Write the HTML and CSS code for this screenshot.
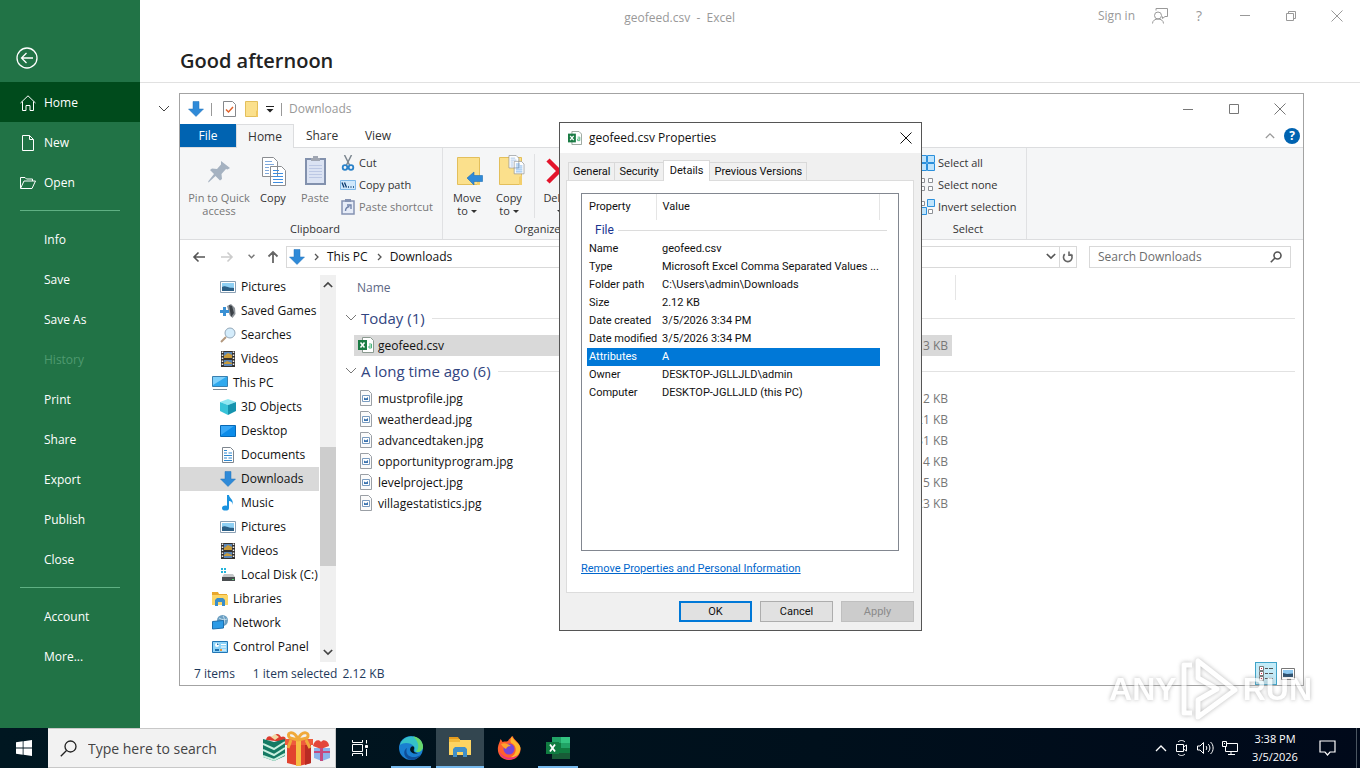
FILE: index.html
```html
<!DOCTYPE html>
<html lang="en">
<head>
    <meta charset="UTF-8">
    <meta name="viewport" content="width=device-width, initial-scale=1.0">
    <title>geofeed.csv - Excel</title>
    <link rel="stylesheet" href="styles.css">
</head>
<body>
    <!-- shared icons -->
    <svg class="defs" width="0" height="0">
        <symbol id="i-down" viewBox="0 0 16 16"><path fill="#2f8ad8" stroke="#2272b9" stroke-width=".5" d="M5 .5h6V8h4.5L8 15.5.5 8H5z"/></symbol>
        <symbol id="i-picture" viewBox="0 0 16 16"><path fill="#fff" stroke="#8aa0b4" d="M.5 2.500h15v11H.5z"/><path fill="#8fd0f4" d="M2 4h12v8H2z"/><path fill="#2b5f86" d="M2 8c3-2 5 1 12 1v3H2z"/></symbol>
        <symbol id="i-video" viewBox="0 0 16 16"><path fill="#33312f" d="M1 0h14v16H1z"/><path fill="#5a86b8" d="M4 1h8v6H4zM4 9h8v6H4z"/><path fill="#c99b3a" d="M4 5l4-3 4 2v3H4zM4 12l3-2 5 2v1H4z"/><path stroke="#eee" stroke-width="1.500" stroke-dasharray="1.500 1.500" d="M2.500 .5v15M13.500 .5v15"/></symbol>
        <symbol id="i-jpg" viewBox="0 0 16 16"><path fill="#fbfbfb" stroke="#9a9fa5" d="M2.500.5h8l3 3v12h-11z"/><path fill="#fff" stroke="#7a9cc0" d="M4.500 5.500h7v6h-7z"/><path fill="#3c74b0" d="M6 10V7.500l2 1L10 7v3z"/></symbol>
        <symbol id="i-csv" viewBox="0 0 16 16"><path fill="#fff" stroke="#8b9a90" d="M4.500.5h8l3 3v12h-11z"/><path fill="#1b7c45" d="M0 3h9v10H0z"/><path stroke="#fff" stroke-width="1.500" d="M2.500 5.500l4 5M6.500 5.500l-4 5"/><path fill="none" stroke="#4bb57c" d="M11 7h2.500v4H11V9h2.500"/></symbol>
        <symbol id="i-close" viewBox="0 0 12 12"><path stroke="currentColor" d="M.5.5l11 11M11.500.5l-11 11"/></symbol>
        <symbol id="i-chev" viewBox="0 0 12 8"><path fill="none" stroke="currentColor" d="M1 1l5 5 5-5"/></symbol>
        <symbol id="i-folder" viewBox="0 0 28 30"><path fill="#fbe08c" stroke="#e3bf5b" d="M.5.5h22v27H.5z"/><path fill="#f3cf6d" d="M20 20l3-2v10h-3z"/></symbol>
        <symbol id="i-pages" viewBox="0 0 26 30"><path fill="#fff" stroke="#8a8d91" d="M1.500.5h11l4 4v15h-15zM9.500 9.500h11l4 4v15h-15z"/><path stroke="#7fa9dc" d="M4 4.500h7M4 7.500h9M4 10.500h4M4 13.500h4M4 16.500h4"/><path stroke="#3d8de0" d="M12 13.500h6M12 16.500h10M12 19.500h10M12 22.500h10M12 25.500h10"/></symbol>
    </svg>

    <div class="excel">
        <aside class="backstage">
            <button class="back" aria-label="Back">
                <svg width="22" height="22" viewBox="0 0 22 22" fill="none" stroke="#fff" stroke-width="1.300"><circle cx="11" cy="11" r="10"/><path d="M17 11H6M10.500 6L5.500 11l5 5"/></svg>
            </button>
            <nav>
                <a href="#" class="item active"><svg width="16" height="16" viewBox="0 0 16 16" fill="none" stroke="#fff"><path d="M.5 8L8 .8 15.500 8M2.500 6.500v9h3.500v-5h4v5h3.500v-9"/></svg>Home</a>
                <a href="#" class="item"><svg width="16" height="16" viewBox="0 0 16 16" fill="none" stroke="#fff"><path d="M2.500.5h7l4 4v11h-11zM9.500.5v4h4"/></svg>New</a>
                <a href="#" class="item"><svg width="16" height="16" viewBox="0 0 16 16" fill="none" stroke="#fff"><path d="M.5 13V2.500h4.500l1.500 1.500h6v2M.5 13.500L4 6h11.500l-3.500 7.500z"/></svg>Open</a>
                <hr>
                <a href="#" class="item sub">Info</a>
                <a href="#" class="item sub">Save</a>
                <a href="#" class="item sub">Save As</a>
                <a href="#" class="item sub off">History</a>
                <a href="#" class="item sub">Print</a>
                <a href="#" class="item sub">Share</a>
                <a href="#" class="item sub">Export</a>
                <a href="#" class="item sub">Publish</a>
                <a href="#" class="item sub">Close</a>
                <hr>
                <a href="#" class="item sub">Account</a>
                <a href="#" class="item sub">More...</a>
            </nav>
        </aside>
        <main class="start">
            <header>
                <div class="excel-title">geofeed.csv&nbsp; - &nbsp;Excel</div>
                <div class="excel-tools">
                    <a href="#" class="signin">Sign in</a>
                    <button aria-label="Feedback"><svg width="18" height="18" viewBox="0 0 18 18" fill="none" stroke="#999"><circle cx="7" cy="8.500" r="3.500"/><path d="M1.500 16.500c0-6 11-6 11 0M5 3.500v-2h11.500v8H14l-2.500 2v-2"/></svg></button>
                    <button class="q">?</button>
                    <button aria-label="Minimize"><svg width="12" height="12" viewBox="0 0 12 12" stroke="#999"><path d="M1 5.500h10"/></svg></button>
                    <button aria-label="Restore"><svg width="12" height="12" viewBox="0 0 12 12" fill="none" stroke="#999"><path d="M1.500 3.500h7v7h-7zM3.500 3V1.500h7v7H9"/></svg></button>
                    <button aria-label="Close"><svg width="12" height="12"><use href="#i-close"/></svg></button>
                </div>
                <h1>Good afternoon</h1>
            </header>
            <button class="collapse" aria-label="Collapse"><svg width="12" height="8"><use href="#i-chev"/></svg></button>
        </main>
    </div>

    <section class="explorer">
        <div class="titlebar">
            <svg width="16" height="16"><use href="#i-down"/></svg>
            <i class="bar"></i>
            <svg class="check" width="13" height="16" viewBox="0 0 13 16"><path fill="#fff" stroke="#85888c" d="M.5.500h9l3 3v12H.5z"/><path fill="none" stroke="#e0622b" stroke-width="1.500" d="M3 8.500l2.500 2.500L10 6"/></svg>
            <svg width="14" height="16" viewBox="0 0 14 16"><path fill="#fbe08c" stroke="#e3bf5b" d="M.5.500h12v15H.5z"/><path fill="#f0c860" d="M11 10l2-1.500V16h-2z"/></svg>
            <svg width="8" height="7" viewBox="0 0 8 7"><path stroke="#222" d="M0 .500h8"/><path fill="#222" d="M.5 3h7L4 6.500z"/></svg>
            <i class="bar"></i>
            <span class="name">Downloads</span>
            <div class="controls">
                <button aria-label="Minimize"><svg width="12" height="12" viewBox="0 0 12 12" stroke="#777"><path d="M1 6.500h10"/></svg></button>
                <button aria-label="Maximize"><svg width="12" height="12" viewBox="0 0 12 12" fill="none" stroke="#777"><path d="M1.500 1.500h9v9h-9z"/></svg></button>
                <button aria-label="Close"><svg width="12" height="12"><use href="#i-close"/></svg></button>
            </div>
        </div>

        <div class="tabs">
            <button class="file">File</button>
            <button class="home">Home</button>
            <button>Share</button>
            <button>View</button>
            <div class="tabs-end">
                <svg width="10" height="7" viewBox="0 0 12 8" fill="none" stroke="#999" stroke-width="1.500"><path d="M1 7l5-5 5 5"/></svg>
                <button class="help">?</button>
            </div>
        </div>

        <div class="ribbon">
            <div class="group clipboard">
                <div class="tools">
                    <button class="big pin off"><svg width="32" height="32" viewBox="0 0 32 32"><path fill="#a5b2c1" d="M18 6l9 7-2.500 1.500-1.500-.5-4.500 5 .5 5-2 1.500-4.500-4.500L6 27l-1 .5.5-1.500 5.500-7L7 15l2-1.500 5 .5 4-4.500z"/></svg><span>Pin to Quick<br>access</span></button>
                    <button class="big copy"><svg width="32" height="32" viewBox="-4 -2 32 32"><use href="#i-pages" width="26" height="30"/></svg><span>Copy</span></button>
                    <button class="big paste off"><svg width="32" height="32" viewBox="0 0 32 32"><path fill="#dbe3f3" stroke="#8291ad" stroke-width="2" d="M7 4h19v25H7z"/><path fill="#a0a6b2" d="M12 3h2V1h5v2h2v3h-9z"/><path stroke="#bcc8e4" d="M10 10.500h13M10 13.500h13M10 16.500h13M10 19.500h13M10 22.500h13"/></svg><span>Paste</span></button>
                    <div class="small">
                        <button><svg width="16" height="16" viewBox="0 0 16 16" fill="none"><path stroke="#7c8790" stroke-width="1.500" d="M4.500 0l5 10M11.500 0l-5 10"/><g stroke="#2a82c9" stroke-width="1.800"><circle cx="5" cy="12.500" r="2.300"/><circle cx="11" cy="12.500" r="2.300"/></g></svg>Cut</button>
                        <button><svg width="16" height="16" viewBox="0 0 16 16"><path fill="#cfe8fb" stroke="#7fb9e8" d="M.5 3.500h15v9H.5z"/><path stroke="#0c3c70" stroke-width="1.300" d="M2 5.500l2 5M4.500 5.500l2 5M8 10h1M10.500 10h1M13 10h1"/></svg>Copy path</button>
                        <button class="off"><svg width="16" height="16" viewBox="0 0 16 16"><path fill="#e6ecf8" stroke="#8593b3" stroke-width="1.500" d="M2 2h12v13H2z"/><path fill="#8593b3" d="M5 0h6v3H5z"/><path fill="none" stroke="#7284ab" stroke-width="1.400" d="M5.500 12c0-3 1-4 4-4.500M7 6h4v4"/></svg>Paste shortcut</button>
                    </div>
                </div>
                <div class="caption">Clipboard</div>
            </div>
            <div class="group organize">
                <div class="tools">
                    <button class="big"><svg width="32" height="32" viewBox="-6 -2 32 32"><use href="#i-folder" width="28" height="30"/><path fill="#2f8ad8" stroke="#1f6fb5" stroke-width=".6" d="M10 21l7-6v3.500h8.500v6H17V28z"/></svg><span>Move<br>to <b></b></span></button>
                    <button class="big"><svg width="32" height="32" viewBox="-6 -2 32 32"><use href="#i-folder" width="28" height="30"/><use href="#i-pages" x="9" y="-2" width="17" height="20"/></svg><span>Copy<br>to <b></b></span></button>
                    <i class="sep"></i>
                    <button class="big"><svg width="32" height="32" viewBox="0 0 32 32"><path stroke="#e3142b" stroke-width="4.500" d="M4 5l22 22M26 5L4 27"/></svg><span>Delete<br><b></b></span></button>
                </div>
                <div class="caption">Organize</div>
            </div>
            <div class="group hidden-part"></div>
            <div class="group select">
                <div class="tools">
                    <div class="small">
                        <button><svg width="16" height="16" viewBox="0 0 16 16"><path fill="#bfe4fc" stroke="#2b90dc" d="M.5.500h7v7h-7zM8.500.500h7v7h-7zM.5 8.500h7v7h-7zM8.500 8.500h7v7h-7z"/></svg>Select all</button>
                        <button><svg width="16" height="16" viewBox="0 0 16 16"><path fill="#fff" stroke="#8d9196" d="M1.500 1.500h4v4h-4zM9.500 1.500h4v4h-4zM1.500 9.500h4v4h-4zM9.500 9.500h4v4h-4z"/></svg>Select none</button>
                        <button><svg width="16" height="16" viewBox="0 0 16 16"><path fill="#fff" stroke="#8d9196" d="M1.500 2.500h4v4h-4zM9.500 10.500h4v4h-4z"/><path fill="#bfe4fc" stroke="#2b90dc" d="M8.500.500h7v7h-7zM.5 8.500h7v7h-7z"/></svg>Invert selection</button>
                    </div>
                </div>
                <div class="caption">Select</div>
            </div>
        </div>

        <div class="address">
            <button aria-label="Back"><svg width="14" height="12" viewBox="0 0 14 12" fill="none" stroke="#555" stroke-width="1.600"><path d="M13 6H2M6.500 1.500L2 6l4.500 4.500"/></svg></button>
            <button aria-label="Forward"><svg width="14" height="12" viewBox="0 0 14 12" fill="none" stroke="#ccc" stroke-width="1.600"><path d="M1 6h11M7.500 1.500L12 6l-4.500 4.500"/></svg></button>
            <button class="recent" aria-label="Recent"><svg width="7" height="5" viewBox="0 0 12 8" fill="none" stroke="#777" stroke-width="2.500"><path d="M1 1l5 5 5-5"/></svg></button>
            <button class="up" aria-label="Up"><svg width="12" height="14" viewBox="0 0 12 14" fill="none" stroke="#666" stroke-width="1.800"><path d="M6 13V2M1.500 6.500L6 2l4.500 4.500"/></svg></button>
            <div class="path">
                <svg width="16" height="16"><use href="#i-down"/></svg>
                <svg class="arrow" width="5" height="8" viewBox="0 0 5 8" fill="none" stroke="#555" stroke-width="1.300"><path d="M1 1l3 3-3 3"/></svg>
                <a href="#">This PC</a>
                <svg class="arrow" width="5" height="8" viewBox="0 0 5 8" fill="none" stroke="#555" stroke-width="1.300"><path d="M1 1l3 3-3 3"/></svg>
                <a href="#">Downloads</a>
                <button class="drop" aria-label="Previous locations"><svg width="10" height="7" viewBox="0 0 12 8" fill="none" stroke="#555" stroke-width="2"><path d="M1 1l5 5 5-5"/></svg></button>
                <button class="refresh" aria-label="Refresh"><svg width="12" height="12" viewBox="0 0 12 12" fill="none" stroke="#666" stroke-width="1.600"><path d="M9.200 3.200A4.300 4.300 0 1 1 3.500 3M5 .5v3.800H1.200" /></svg></button>
            </div>
            <label class="find">
                <input type="text" placeholder="Search Downloads" aria-label="Search Downloads">
                <svg width="12" height="12" viewBox="0 0 12 12" fill="none" stroke="#555" stroke-width="1.600"><circle cx="7.500" cy="4.500" r="3.500"/><path d="M5 7L.8 11.200"/></svg>
            </label>
        </div>

        <div class="browser">
            <nav class="tree">
                <a href="#"><svg width="16" height="16"><use href="#i-picture"/></svg>Pictures</a>
                <a href="#"><svg width="16" height="16" viewBox="0 0 16 16"><path fill="#8c9298" d="M7 3l4-2 4 4 .5 6-3 4-3-3z"/><path fill="#3b4147" d="M9 2l3 1 2 7-3 4z"/><path fill="#3a90d4" d="M3 4h3v3h3v3H6v3H3v-3H0V7h3z"/></svg>Saved Games</a>
                <a href="#"><svg width="16" height="16" viewBox="0 0 16 16"><path stroke="#b3987e" stroke-width="2" d="M6 10l-5 5"/><circle cx="10" cy="6" r="5" fill="#d4ecfb" stroke="#93a7b8"/></svg>Searches</a>
                <a href="#"><svg width="16" height="16"><use href="#i-video"/></svg>Videos</a>
                <a href="#" class="top"><svg width="16" height="16" viewBox="0 0 16 16"><path fill="#2fa9ee" stroke="#3a7fae" d="M.5 1.500h15v10H.5z"/><path fill="#7ed0fb" d="M1 2h13L1 10z"/><path stroke="#7b8a96" d="M1 14.500h14"/></svg>This PC</a>
                <a href="#"><svg width="16" height="16" viewBox="0 0 16 16"><path fill="#8fe8f2" d="M0 3l8-3 8 3-8 3z"/><path fill="#38c3d8" d="M0 3l8 3v10l-8-4z"/><path fill="#1593ae" d="M16 3L8 6v10l8-4z"/></svg>3D Objects</a>
                <a href="#"><svg width="16" height="16" viewBox="0 0 16 16"><path fill="#0c8ce9" stroke="#0868b4" d="M.5 2.500h15v11H.5z"/><path fill="#39a8f7" d="M1 3h13L1 12z"/></svg>Desktop</a>
                <a href="#"><svg width="16" height="16" viewBox="0 0 16 16"><path fill="#fff" stroke="#7e868e" d="M2.500.500h8l3 3v12h-11z"/><path stroke="#2f88d0" stroke-width="1.200" d="M4 3.500h3M4 6h3M8.500 6H12M4 8.500h8M4 11h3M8.500 11H12M4 13.500h8"/></svg>Documents</a>
                <a href="#" class="current"><svg width="16" height="16"><use href="#i-down"/></svg>Downloads</a>
                <a href="#"><svg width="16" height="16" viewBox="0 0 16 16"><ellipse cx="5.500" cy="13" rx="3.500" ry="2.600" fill="#1b93e0"/><path fill="#1b93e0" d="M7 0h2c0 3 5 4 3.500 10 0-3-1.500-4-3.500-4v7H7z"/></svg>Music</a>
                <a href="#"><svg width="16" height="16"><use href="#i-picture"/></svg>Pictures</a>
                <a href="#"><svg width="16" height="16"><use href="#i-video"/></svg>Videos</a>
                <a href="#"><svg width="16" height="16" viewBox="0 0 16 16"><path fill="#22b5dc" d="M1 1h2v2H1zM4 1h2v2H4zM1 4h2v2H1zM4 4h2v2H4z"/><path fill="#c3c6c8" d="M4 7h9l2 3H2z"/><path fill="#4a4e51" d="M2 10h13v4H2z"/><path fill="#4fd36b" d="M12 12h2v1h-2z"/></svg>Local Disk (C:)</a>
                <a href="#" class="top"><svg width="16" height="16" viewBox="0 0 16 16"><path fill="#e9a82d" d="M0 1h6l1 2h8v11H0z"/><path fill="#fcd667" d="M0 4h16v10H0z"/><path fill="#3a8dc9" d="M3 15V9l2-2h6l2 2v6h-3v-4H6v4z"/></svg>Libraries</a>
                <a href="#" class="top"><svg width="16" height="16" viewBox="0 0 16 16"><circle cx="10.500" cy="5.500" r="5.500" fill="#6b9fc2"/><path fill="none" stroke="#c7dfee" d="M7 3c3 2 6 2 8 1M11 1c2 3 2 6 0 9"/><path fill="#2d9be6" stroke="#1d6fae" d="M.5 6.500l11-1v7.500l-11 1z"/></svg>Network</a>
                <a href="#" class="top"><svg width="16" height="16" viewBox="0 0 16 16"><path fill="#8ed3f8" stroke="#2276b5" d="M.5 2.500h15v11H.5z"/><circle cx="5" cy="6" r="2" fill="#fff"/><path fill="#1d6fae" d="M5 4v2h2zM3 10h4v2H3z"/><path stroke="#fff" d="M9 5.500h5M9 8h5M9 11h5"/><path fill="#e8963c" d="M8 10h2v2H8z"/></svg>Control Panel</a>
            </nav>
            <div class="scroll">
                <svg width="10" height="7" viewBox="0 0 12 8" fill="none" stroke="#444" stroke-width="2"><path d="M1 7l5-5 5 5"/></svg>
                <div class="track"><div class="thumb"></div></div>
                <svg width="10" height="7" viewBox="0 0 12 8" fill="none" stroke="#444" stroke-width="2"><path d="M1 1l5 5 5-5"/></svg>
            </div>
            <div class="files">
                <div class="cols"><span>Name</span></div>
                <h2><svg width="12" height="8"><use href="#i-chev"/></svg>Today (1)</h2>
                <table>
                    <tr class="picked"><td><svg width="16" height="16"><use href="#i-csv"/></svg>geofeed.csv</td><td>3 KB</td></tr>
                </table>
                <h2><svg width="12" height="8"><use href="#i-chev"/></svg>A long time ago (6)</h2>
                <table>
                    <tr><td><svg width="16" height="16"><use href="#i-jpg"/></svg>mustprofile.jpg</td><td>12 KB</td></tr>
                    <tr><td><svg width="16" height="16"><use href="#i-jpg"/></svg>weatherdead.jpg</td><td>21 KB</td></tr>
                    <tr><td><svg width="16" height="16"><use href="#i-jpg"/></svg>advancedtaken.jpg</td><td>31 KB</td></tr>
                    <tr><td><svg width="16" height="16"><use href="#i-jpg"/></svg>opportunityprogram.jpg</td><td>14 KB</td></tr>
                    <tr><td><svg width="16" height="16"><use href="#i-jpg"/></svg>levelproject.jpg</td><td>15 KB</td></tr>
                    <tr><td><svg width="16" height="16"><use href="#i-jpg"/></svg>villagestatistics.jpg</td><td>23 KB</td></tr>
                </table>
            </div>
        </div>

        <div class="status">
            <span>7 items</span><span class="sel">1 item selected</span><span>2.12 KB</span>
            <div class="views">
                <button class="on" aria-label="Details"><svg width="18" height="18" viewBox="0 0 18 18"><path fill="#fff" stroke="#777" d="M2.500 1.500h4v4h-4zM2.500 6.500h4v4h-4zM2.500 11.500h4v4h-4z"/><path fill="#d24" d="M4 3h1v1H4zM4 8h1v1H4zM4 13h1v1H4z"/><path stroke="#555" d="M8 3.500h3M12 3.500h4M8 8.500h3M12 8.500h4M8 13.500h3M12 13.500h4"/></svg></button>
                <button aria-label="Large icons"><svg width="14" height="12" viewBox="0 0 14 12"><path fill="#fff" stroke="#777" d="M.5.500h13v11H.5z"/><path fill="#8cc8f0" d="M2 2h10v4H2z"/><path fill="#2c4f6d" d="M2 5l4 1 6-.5V9H2z"/></svg></button>
            </div>
        </div>
    </section>

    <section class="dialog">
        <div class="dialog-title">
            <svg width="14" height="14"><use href="#i-csv"/></svg>
            <span>geofeed.csv Properties</span>
            <button aria-label="Close"><svg width="12" height="12"><use href="#i-close"/></svg></button>
        </div>
        <div class="dialog-tabs">
            <button>General</button>
            <button>Security</button>
            <button class="active">Details</button>
            <button>Previous Versions</button>
        </div>
        <div class="page">
            <div class="listbox">
                <table>
                    <thead>
                        <tr><th>Property</th><th>Value</th></tr>
                    </thead>
                    <tbody>
                        <tr class="section"><td colspan="2"><span>File</span></td></tr>
                        <tr><td>Name</td><td>geofeed.csv</td></tr>
                        <tr><td>Type</td><td>Microsoft Excel Comma Separated Values ...</td></tr>
                        <tr><td>Folder path</td><td>C:\Users\admin\Downloads</td></tr>
                        <tr><td>Size</td><td>2.12 KB</td></tr>
                        <tr><td>Date created</td><td>3/5/2026 3:34 PM</td></tr>
                        <tr><td>Date modified</td><td>3/5/2026 3:34 PM</td></tr>
                        <tr class="picked"><td>Attributes</td><td>A</td></tr>
                        <tr><td>Owner</td><td>DESKTOP-JGLLJLD\admin</td></tr>
                        <tr><td>Computer</td><td>DESKTOP-JGLLJLD (this PC)</td></tr>
                    </tbody>
                </table>
            </div>
            <a href="#">Remove Properties and Personal Information</a>
        </div>
        <div class="buttons">
            <button class="ok">OK</button>
            <button>Cancel</button>
            <button disabled>Apply</button>
        </div>
    </section>

    <div class="watermark">
        <span>ANY</span>
        <svg width="58" height="66" viewBox="0 0 58 66" fill="none" stroke="#fff" stroke-width="5" stroke-linejoin="round"><path d="M17 5v17l19 11-19 11v17l37-27z"/><path d="M11 9H3v48h8"/></svg>
        <span>RUN</span>
    </div>

    <footer class="taskbar">
        <button class="win" aria-label="Start"><svg width="16" height="16" viewBox="0 0 16 16" fill="#fff"><path d="M0 2.300L6.700 1.300v6.300H0zM7.500 1.200L16 0v7.600H7.500zM0 8.400h6.700v6.300L0 13.700zM7.500 8.400H16V16l-8.500-1.200z"/></svg></button>
        <label class="type">
            <svg width="17" height="17" viewBox="0 0 17 17" fill="none" stroke="#222" stroke-width="1.300"><circle cx="10.500" cy="6.500" r="5.500"/><path d="M6.500 10.500L.8 16.200"/></svg>
            <input type="text" placeholder="Type here to search" aria-label="Type here to search">
            <svg class="gifts" width="68" height="36" viewBox="0 0 68 36">
                <path fill="#dc3b2e" d="M3 10c1-5 5-4 7-2 2-5 6-5 8-1 4-2 6 2 4 5z"/>
                <path fill="#f3d8a4" d="M8 7l4-3 4 3-4 3z"/>
                <path fill="#157a63" d="M0 9l11 3 11-3v17l-11 5-11-4z"/>
                <path fill="none" stroke="#c8f0df" stroke-width="2" d="M0 14l11 5 11-7M0 20l11 5 11-7M0 26l11 4 11-6"/>
                <path fill="#e2432f" d="M24 13h24v20l-12 3-12-3z"/>
                <path fill="#b92b23" d="M42 13h6v20l-6 2z"/>
                <path fill="#ee5a3d" d="M22 9h28v6H22z"/>
                <path fill="#f6bd43" d="M33 9h5v27h-5z"/>
                <path fill="none" stroke="#f0a93a" stroke-width="3" d="M35 9C30-1 22 3 27 8l8 2 9-2c4-5-4-9-9 1M28 10l-3 8M43 10l4 8"/>
                <path fill="#8bb4ea" d="M51 18h16v10l-8 3-8-3z"/>
                <path fill="#e3453a" d="M50 16c1-6 6-7 8-4 3-4 8 0 8 4l-8 3z"/>
                <path fill="#c54a7f" d="M57 18h3v13h-3zM51 21h16v2H51z"/>
            </svg>
        </label>
        <button class="app view" aria-label="Task View"><svg width="17" height="17" viewBox="0 0 17 17" fill="none" stroke="#fff"><path d="M.5 4.500h10v7H.5zM.5 0v2.500h10V0M.5 16v-2.500h10V16M14.500 0v3.500M14.500 9v7"/><path fill="#fff" d="M13.500 5.500h2v2h-2z"/></svg></button>
        <button class="app open" aria-label="Edge"><svg width="24" height="24" viewBox="0 0 24 24"><circle cx="12" cy="12" r="12" fill="#1a7fd0"/><path fill="#35c1c8" d="M1 9C4-2 20-3 24 10c0 5-4 7-7 6-3-1 0-3-2-5.500C12 6 4 6 1 9z"/><path fill="#67d86b" d="M14 .3c6 1 10 5 10 10.500 0 4-4 6-7 5 5-5 1-12-3-15.500z"/><path fill="#0f4f99" d="M8 12c-3 8 6 12 14 6.500C19 23 14 25 10 23.500 4 21 4 14 8 12z"/><path fill="#001720" d="M12 11c2-2 4 0 3 2-1 3 1 4 4 4-5 2-10-2-7-6z"/></svg></button>
        <button class="app front" aria-label="File Explorer"><svg width="24" height="20" viewBox="0 0 24 20"><path fill="#e59a1c" d="M1 0h9l2 3h-11z"/><path fill="#fcd462" d="M1 3h22v15H1z"/><path fill="#f0b93c" d="M1 2h11v3H1z"/><path fill="#3f8fc9" d="M5 20V12l2-2h10l2 2v8h-4v-5H9v5z"/></svg></button>
        <button class="app" aria-label="Firefox"><svg width="24" height="24" viewBox="0 0 24 24"><path fill="#ff5f2e" d="M12 24C4 24 0 18 1 11c.3-3 2-5 2.500-8 1 1 1.500 2 2 3C8 5 9 6 11 5c1-2 3-4 5-5-.5 4 8 6 7.500 14C23 20 18 24 12 24z"/><path fill="#ffb92c" d="M15 0c0 4 8 7 8.500 12C23 19 18 22 14 21c6-3 6-10 2-13-2-1-4-2-1-8z"/><path fill="#e8318b" d="M2 15c4 7 12 9 19 4-5 7-16 6-19-4z"/><circle cx="12" cy="13" r="5.500" fill="#7646d8"/><path fill="#ffa42c" d="M4 8c4-2 7 0 10 2-3 0-4 1-5 3-2-1-3-2-5-5z"/></svg></button>
        <button class="app open" aria-label="Excel"><svg width="24" height="22" viewBox="0 0 24 22"><path fill="#21a366" d="M6 0h18v22H6z"/><path fill="#33c481" d="M15 0h9v6h-9z"/><path fill="#107c41" d="M6 6h9v10H6zM15 11h9v5h-9z"/><path fill="#185c37" d="M6 16h18v6H6z"/><path fill="#107c41" d="M0 5h13v12H0z"/><path stroke="#fff" stroke-width="1.800" d="M4 7.500l5 7M9 7.500l-5 7"/></svg></button>
        <div class="tray">
            <svg width="12" height="8" viewBox="0 0 12 8" fill="none" stroke="#fff" stroke-width="1.300"><path d="M1 7l5-5 5 5"/></svg>
            <svg width="14" height="16" viewBox="0 0 14 16" fill="none" stroke="#fff"><path d="M1.500 4.500h7v7h-7zM8.500 7l3-2v6l-3-2M3 2c2-2 5-2 7 0M3 14c2 2 5 2 7 0"/></svg>
            <svg width="17" height="14" viewBox="0 0 17 14" fill="none" stroke="#fff"><path d="M.5 5v4h2.500l3.500 3.500v-11L3 5zM9 5c1 1 1 3 0 4M11 3c2.500 2 2.500 6 0 8M13.500 1c3.500 3 3.500 9 0 12"/></svg>
            <svg width="16" height="14" viewBox="0 0 16 14" fill="none" stroke="#fff"><path d="M5 2.500h10.500v8H3.500V6M9 10.500v3M6 13.500h7M.5.500h4v5h-4zM2 2.500h1"/></svg>
            <div class="clock">3:38 PM<br>3/5/2026</div>
            <svg width="17" height="16" viewBox="0 0 17 16" fill="none" stroke="#fff" stroke-width="1.200"><path d="M1 1h15v11h-5l-2.500 3L6 12H1z"/></svg>
        </div>
    </footer>
</body>
</html>
```

FILE: styles.css
```css
* {
    box-sizing: border-box;
}
body {
    margin: 0;
    height: 100vh;
    display: flex;
    flex-direction: column;
    overflow: hidden;
    position: relative;
    background: #fff;
    color: #111;
    font-family: "Open Sans", "Noto Sans", sans-serif;
    font-size: 12px;
    line-height: 16px;
}
button {
    font: inherit;
    color: inherit;
    background: none;
    border: none;
    padding: 0;
    display: flex;
    align-items: center;
    justify-content: center;
}
a {
    color: inherit;
    text-decoration: none;
}
svg {
    flex: none;
    display: block;
}
.defs {
    position: absolute;
}

/* excel backstage */
.excel {
    flex: 1;
    display: flex;
    min-height: 0;
}
.backstage {
    width: 140px;
    background: #217346;
    color: #fff;
}
.back {
    margin: 47px 0 13px 16px;
}
.item {
    display: flex;
    align-items: center;
    gap: 8px;
    height: 40px;
    padding: 2px 0 0 20px;
}
.item.active {
    background: #004b1c;
}
.item.sub {
    padding-left: 44px;
}
.item.off {
    color: #4f9a70;
}
.backstage hr {
    border: none;
    height: 1px;
    margin: 8px 20px;
    background: #5fb083;
}
.start {
    flex: 1;
}
.start header {
    height: 83px;
    border-bottom: 1px solid #e1e1e1;
    display: grid;
    grid-template-columns: 1fr 1fr;
    grid-template-rows: 34px 1fr;
    color: #999;
}
.excel-title {
    align-self: end;
    justify-self: end;
    padding: 0 15px 8px 0;
}
.excel-tools {
    display: flex;
    align-items: center;
    justify-content: flex-end;
    height: 32px;
}
.excel-tools button {
    width: 46px;
}
.excel-tools .q {
    width: 32px;
    margin-right: 7px;
    font-size: 14px;
}
.signin {
    margin-right: 2px;
}
.start h1 {
    margin: 0;
    padding: 12px 0 0 40px;
    font-size: 20px;
    line-height: 30px;
    font-weight: 600;
    color: #222;
}
.collapse {
    margin: 22px 0 0 18px;
    color: #444;
}

/* explorer window */
.explorer {
    position: absolute;
    left: 179px;
    right: 56px;
    top: 93px;
    bottom: 82px;
    border: 1px solid #a3a3a3;
    background: #fff;
    display: flex;
    flex-direction: column;
}
.titlebar {
    display: flex;
    align-items: center;
    height: 30px;
    padding-left: 8px;
    gap: 7px;
    color: #999;
}
.titlebar .bar {
    width: 1px;
    height: 13px;
    background: #999;
}
.titlebar .check {
    margin: 0 2px 0 4px;
}
.controls {
    margin-left: auto;
    display: flex;
}
.controls button {
    width: 46px;
    height: 30px;
    color: #777;
}
.tabs {
    display: flex;
    height: 24px;
    border-bottom: 1px solid #dcdddf;
}
.tabs > button {
    width: 56px;
    color: #333;
}
.tabs .file {
    background: #0063b1;
    color: #fff;
}
.tabs .home {
    width: 58px;
    height: 24px;
    background: #f5f6f7;
    border: 1px solid #dcdddf;
    border-bottom: none;
}
.tabs-end {
    margin-left: auto;
    display: flex;
    align-items: center;
    gap: 9px;
    padding-right: 3px;
}
.help {
    width: 16px;
    height: 16px;
    border-radius: 50%;
    background: #0063b1;
    color: #fff;
    font-weight: bold;
}
.ribbon {
    display: flex;
    height: 92px;
    background: #f5f6f7;
    border-bottom: 1px solid #dcdddf;
    color: #333;
    font-size: 11px;
}
.group {
    display: flex;
    flex-direction: column;
    justify-content: space-between;
    padding-top: 4px;
    border-right: 1px solid #e0e1e3;
}
.tools {
    display: flex;
}
.big {
    flex-direction: column;
    justify-content: flex-start;
    width: 42px;
    height: 66px;
    padding-top: 3px;
    line-height: 13px;
    white-space: nowrap;
}
.big svg {
    margin-bottom: 4px;
}
.big b {
    display: inline-block;
    border: 3px solid transparent;
    border-top-color: #333;
    border-bottom: none;
    margin: 2px 0;
}
.off {
    color: #777;
}
.pin {
    width: 62px;
}
.copy {
    width: 46px;
}
.paste {
    width: 38px;
}
.small {
    display: flex;
    flex-direction: column;
    align-items: flex-start;
}
.small button {
    height: 22px;
    gap: 3px;
    white-space: nowrap;
}
.clipboard {
    width: 263px;
    padding-left: 8px;
}
.clipboard .small {
    padding-left: 6px;
}
.caption {
    text-align: center;
    padding-bottom: 2px;
}
.organize {
    width: 190px;
}
.organize .tools {
    padding-left: 3px;
}
.sep {
    width: 1px;
    margin: 2px 4px 0;
    background: #e0e1e3;
}
.hidden-part {
    width: 277px;
}
.select {
    width: 117px;
}
.select .tools {
    padding-left: 9px;
}

.address {
    display: flex;
    align-items: center;
    height: 35px;
    padding: 0 12px 2px 5px;
}
.address > button {
    width: 28px;
}
.address > .recent {
    width: 20px;
}
.address > .up {
    width: 24px;
    margin-right: 1px;
}
.path {
    flex: 1;
    display: flex;
    align-items: center;
    height: 22px;
    padding-left: 2px;
    border: 1px solid #d9d9d9;
}
.arrow {
    margin: 0 8px 0 9px;
}
.drop {
    margin-left: auto;
    width: 16px;
}
.refresh {
    width: 17px;
    height: 20px;
    border-left: 1px solid #d9d9d9;
}
.refresh svg {
    transform: scaleX(-1);
}
.find {
    width: 202px;
    height: 22px;
    margin-left: 12px;
    padding: 0 8px;
    display: flex;
    align-items: center;
    border: 1px solid #d9d9d9;
}
input {
    flex: 1;
    min-width: 0;
    border: none;
    outline: none;
    padding: 0;
    background: none;
    font: inherit;
}
input::placeholder {
    color: #6d6d6d;
}

.browser {
    flex: 1;
    display: flex;
    min-height: 0;
}
.tree {
    width: 139px;
    white-space: nowrap;
}
.tree a {
    display: flex;
    align-items: center;
    gap: 5px;
    height: 24px;
    padding-left: 40px;
}
.tree a.top {
    padding-left: 32px;
}
.tree a.current {
    background: #d9d9d9;
}
.scroll {
    width: 16px;
    margin-left: 1px;
    display: flex;
    flex-direction: column;
    align-items: center;
    padding: 6px 0;
    background: #f0f0f0;
}
.track {
    flex: 1;
    width: 100%;
    display: flex;
    flex-direction: column;
    justify-content: flex-end;
}
.thumb {
    height: 33%;
    margin-bottom: 83px;
    background: #cdcdcd;
}
.files {
    flex: 1;
    padding-right: 8px;
}
.cols {
    display: flex;
    height: 28px;
    width: 620px;
    padding: 5px 0 0 21px;
    color: #5c6784;
    background: linear-gradient(#e5e5e5, #e5e5e5) right top / 1px 25px no-repeat;
}
.files h2 {
    display: flex;
    align-items: center;
    height: 32px;
    margin: 0;
    padding: 0 0 2px 9px;
    gap: 4px;
    font-size: 15px;
    font-weight: normal;
    color: #32457f;
}
.files h2 svg {
    color: #777;
}
.files h2::after {
    content: "";
    flex: 1;
    height: 1px;
    margin-left: 3px;
    background: #e2e2e2;
}
.files table {
    width: 598px;
    margin-left: 18px;
    border-collapse: collapse;
}
.files td {
    height: 21px;
    padding: 0 4px;
}
.files td svg {
    display: inline-block;
    vertical-align: -3px;
    margin-right: 4px;
}
.files td:last-child {
    text-align: right;
    color: #777;
}
.files .picked {
    background: #d9d9d9;
}
.status {
    display: flex;
    align-items: center;
    height: 23px;
    padding: 0 4px 0 14px;
    color: #1e395b;
}
.status .sel {
    margin: 0 5px 0 18px;
}
.views {
    margin-left: auto;
    display: flex;
}
.views button {
    width: 22px;
    height: 23px;
}
.views .on {
    border: 1px solid #3fa3c8;
    background: #c3ebf8;
}

/* properties dialog */
.dialog {
    position: absolute;
    left: 559px;
    top: 122px;
    width: 363px;
    border: 1px solid #555;
    background: #f0f0f0;
    font-family: Roboto, "Liberation Sans", sans-serif;
    font-size: 11px;
    line-height: 14px;
}
.dialog-title {
    display: flex;
    align-items: center;
    height: 30px;
    padding: 0 9px 0 8px;
    gap: 7px;
    background: #fff;
    font-family: "Open Sans", "Noto Sans", sans-serif;
    font-size: 12px;
}
.dialog-title button {
    margin-left: auto;
}
.dialog-tabs {
    display: flex;
    align-items: flex-end;
    height: 27px;
    padding-left: 8px;
}
.dialog-tabs button {
    height: 18px;
    padding: 0 4px;
    border: 1px solid #d9d9d9;
    border-bottom: none;
    margin-right: -1px;
}
.dialog-tabs .active {
    height: 21px;
    padding: 0 6px;
    margin-bottom: -1px;
    background: #fff;
    z-index: 1;
}
.page {
    margin: 0 7px 0 6px;
    padding: 12px 14px 16px;
    border: 1px solid #dcdcdc;
    background: #fff;
}
.page a {
    display: block;
    margin-top: 11px;
    color: #0066cc;
    text-decoration: underline;
}
.listbox {
    height: 358px;
    border: 1px solid #828790;
    padding: 0 18px 0 5px;
}
.listbox table {
    width: 100%;
    table-layout: fixed;
    border-collapse: collapse;
    white-space: nowrap;
}
.listbox th {
    height: 26px;
    padding: 0 2px;
    font-weight: normal;
    text-align: left;
    border-right: 1px solid #e5e5e5;
}
.listbox th:first-child {
    width: 69px;
}
.listbox th:last-child {
    padding-left: 6px;
}
.listbox td {
    height: 18px;
    padding: 0 2px;
}
.listbox td + td {
    padding-left: 6px;
}
.listbox .section td {
    height: 20px;
    padding: 0 0 0 8px;
}
.section span {
    display: flex;
    align-items: center;
    gap: 4px;
    margin-right: -7px;
    font-size: 12px;
    color: #1a3590;
}
.section span::after {
    content: "";
    flex: 1;
    height: 1px;
    background: #dcdcdc;
}
.listbox .picked {
    background: #0078d7;
    color: #fff;
}
.buttons {
    display: flex;
    justify-content: flex-end;
    gap: 8px;
    padding: 8px 7px 8px;
}
.buttons button {
    width: 73px;
    height: 21px;
    border: 1px solid #adadad;
    background: #e1e1e1;
}
.buttons .ok {
    border: 2px solid #0078d7;
}
.buttons button:disabled {
    background: #ccc;
    border-color: #bfbfbf;
    color: #8a8a8a;
}

.watermark {
    position: absolute;
    right: 48px;
    bottom: 46px;
    display: flex;
    align-items: center;
    gap: 4px;
    font: bold 32px/40px "Liberation Sans", sans-serif;
    color: #fff;
    opacity: 0.7;
    filter: drop-shadow(0 0 2px #999);
}

/* taskbar */
.taskbar {
    display: flex;
    height: 40px;
    background: linear-gradient(90deg, #001721, #00101c 60%, #00091a);
    color: #fff;
}
.win {
    width: 48px;
}
.type {
    width: 288px;
    display: flex;
    align-items: center;
    gap: 11px;
    padding: 0 4px 0 12px;
    background: #f2f2f2;
    border: 1px solid #c8c8c8;
    border-left: none;
    font-size: 14px;
}
.type input {
    height: 24px;
}
.type input::placeholder {
    color: #444;
}
.app {
    width: 40px;
    margin-left: 9px;
}
.app.view {
    width: 48px;
    margin: 0 -2px 0 0;
}
.app.open {
    border-bottom: 2px solid #76b9ed;
    padding-top: 2px;
}
.app.front {
    width: 48px;
    margin: 0 -4px 0 5px;
    background: #334650;
    border-bottom: 2px solid #76b9ed;
}
.tray {
    margin-left: auto;
    display: flex;
    align-items: center;
    gap: 8px;
    padding-right: 20px;
    margin-right: 3px;
    border-right: 1px solid #4a5560;
}
.clock {
    width: 58px;
    margin-right: 7px;
    text-align: center;
    font-size: 11px;
    line-height: 18px;
}
```
